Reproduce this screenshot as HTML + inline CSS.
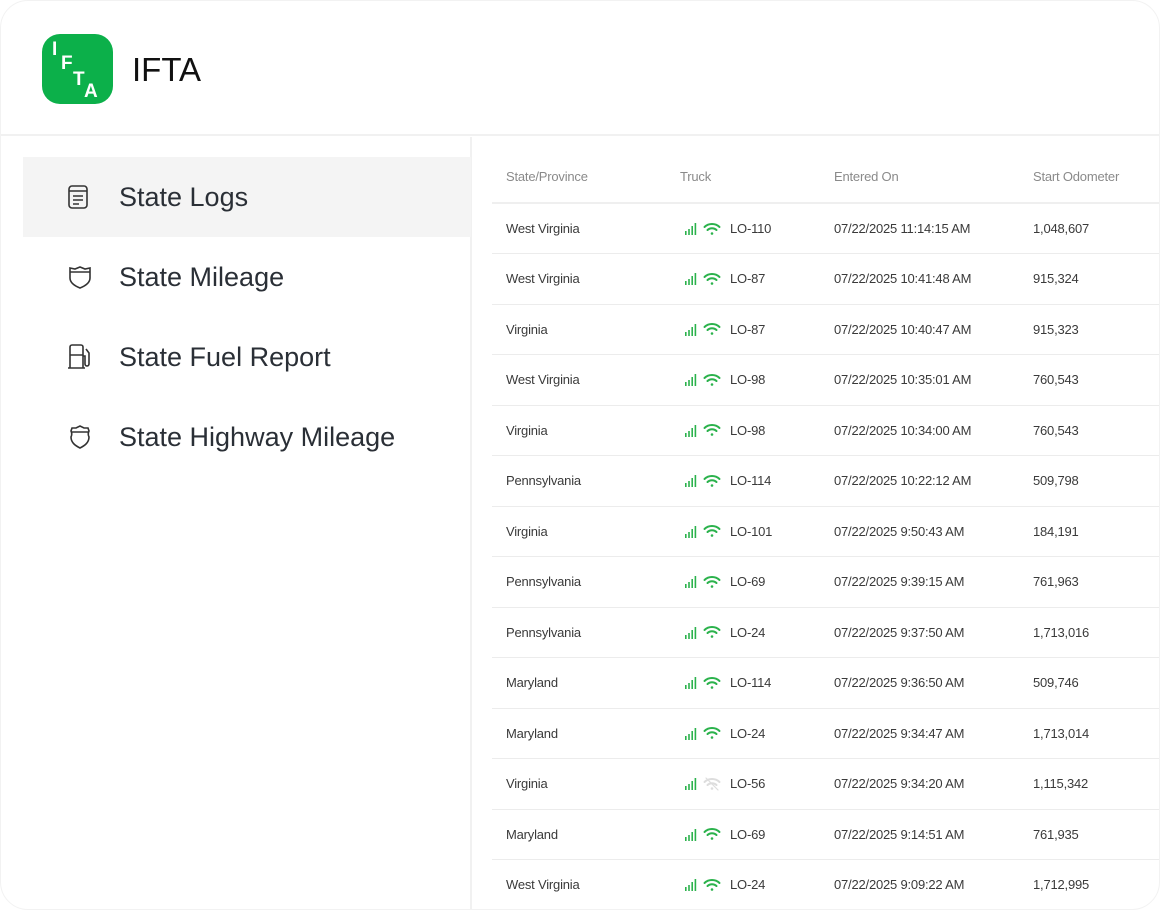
<!DOCTYPE html>
<html><head><meta charset="utf-8"><style>
*{margin:0;padding:0;box-sizing:border-box}
body{width:1160px;height:910px;background:#fff;font-family:"Liberation Sans",sans-serif;overflow:hidden;position:relative}
.card{position:absolute;left:0;top:0;width:1160px;height:910px;border:1px solid #f2f2f2;border-radius:28px;overflow:hidden;background:#fff}
.hdr{position:absolute;left:0;top:0;width:1160px;height:135px;border-bottom:2px solid #f1f1f1}
.logo{position:absolute;left:41px;top:33px;width:71px;height:70px;background:#0cb04a;border-radius:18px;color:#fff;font-weight:bold}
.logo span{position:absolute;font-size:19px;line-height:1}
.title{position:absolute;left:131px;top:50px;font-size:33px;color:#111}
.side{position:absolute;left:0;top:136px;width:471px;height:774px;border-right:2px solid #f1f1f1}
.item{position:absolute;left:22px;width:448px;height:80px;display:flex;align-items:center;font-size:27px;color:#2a2f36}
.item svg{position:absolute;left:44px}
.item .t{position:absolute;left:96px}
.act{background:#f4f4f4}
table{position:absolute;left:491px;top:150px;width:669px;border-collapse:collapse;font-size:13px;color:#3a3a3a;letter-spacing:-0.2px}
th{height:52px;text-align:left;font-weight:normal;color:#8a8a8a;border-bottom:2px solid #efefef}
td{height:50.5px;border-bottom:1px solid #ececec}
th:nth-child(1),td:nth-child(1){padding-left:14px;width:188px}
th:nth-child(2),td:nth-child(2){width:154px}
th:nth-child(3),td:nth-child(3){width:199px}
.tr{display:flex;align-items:center;gap:4px;margin-left:4px}
</style></head><body>
<div class="card">
<div class="hdr">
<div class="logo"><span style="left:10px;top:6px">I</span><span style="left:19px;top:20px">F</span><span style="left:31px;top:36px">T</span><span style="left:42px;top:48px">A</span></div>
<div class="title">IFTA</div>
</div>
<div class="side">
<div class="item act" style="top:20px"><svg width="22" height="26" viewBox="0 0 22 26" fill="none" stroke="#333" stroke-width="1.6"><rect x="2" y="2" width="18" height="22" rx="3"/><path d="M2 7h18M6 12h10M6 16h10M6 20h6"/></svg><span class="t">State Logs</span></div>
<div class="item" style="top:100px"><svg width="26" height="26" viewBox="0 0 26 26" fill="none" stroke="#333" stroke-width="1.6"><path d="M3 4l5 1 5-2 5 2 5-1v10c0 5-5 8-10 10C8 22 3 19 3 14z"/><path d="M3 8h20"/></svg><span class="t">State Mileage</span></div>
<div class="item" style="top:180px"><svg width="28" height="28" viewBox="0 0 28 28" fill="none" stroke="#333" stroke-width="1.6"><path d="M3 25V4a2 2 0 0 1 2-2h9a2 2 0 0 1 2 2v21M1 25h17M3 12h13M16 13h2v8a2 2 0 0 0 4 0V10l-3-4"/></svg><span class="t">State Fuel Report</span></div>
<div class="item" style="top:260px"><svg width="26" height="26" viewBox="0 0 26 26" fill="none" stroke="#333" stroke-width="1.6"><path d="M5 4l4 0 4-2 4 2 4 0 1 3c-1 2-1 4 0 6 0 6-5 9-9 11-4-2-9-5-9-11 1-2 1-4 0-6z"/><path d="M4 8h18"/></svg><span class="t">State Highway Mileage</span></div>
</div>
<table>
<tr><th>State/Province</th><th>Truck</th><th>Entered On</th><th>Start Odometer</th></tr>
</table>
</div>
<script>
const rows=[["West Virginia","LO-110","07/22/2025 11:14:15 AM","1,048,607"],["West Virginia","LO-87","07/22/2025 10:41:48 AM","915,324"],["Virginia","LO-87","07/22/2025 10:40:47 AM","915,323"],["West Virginia","LO-98","07/22/2025 10:35:01 AM","760,543"],["Virginia","LO-98","07/22/2025 10:34:00 AM","760,543"],["Pennsylvania","LO-114","07/22/2025 10:22:12 AM","509,798"],["Virginia","LO-101","07/22/2025 9:50:43 AM","184,191"],["Pennsylvania","LO-69","07/22/2025 9:39:15 AM","761,963"],["Pennsylvania","LO-24","07/22/2025 9:37:50 AM","1,713,016"],["Maryland","LO-114","07/22/2025 9:36:50 AM","509,746"],["Maryland","LO-24","07/22/2025 9:34:47 AM","1,713,014"],["Virginia","LO-56","07/22/2025 9:34:20 AM","1,115,342"],["Maryland","LO-69","07/22/2025 9:14:51 AM","761,935"],["West Virginia","LO-24","07/22/2025 9:09:22 AM","1,712,995"]];
const t=document.querySelector('table');
rows.forEach((r,i)=>{const c=i==11?'#ddd':'#2bb24c';
const sig='<svg width="15" height="13" viewBox="0 0 15 13"><g fill="#2bb24c"><rect x="1" y="9" width="1.6" height="4"/><rect x="4.2" y="7" width="1.6" height="6"/><rect x="7.4" y="4" width="1.6" height="9"/><rect x="10.6" y="1" width="1.6" height="12"/></g></svg>';
const wifi='<svg width="18" height="14" viewBox="0 0 18 14" fill="none" stroke="'+c+'" stroke-width="2" stroke-linecap="round"><path d="M1.5 5a11 11 0 0 1 15 0M4.5 8a6.5 6.5 0 0 1 9 0"/><circle cx="9" cy="11.5" r="1.3" fill="'+c+'" stroke="none"/>'+(i==11?'<path d="M3 1l12 12" stroke-width="1.2"/>':'')+'</svg>';
t.insertAdjacentHTML('beforeend','<tr><td>'+r[0]+'</td><td><div class="tr">'+sig+wifi+'<span style="margin-left:5px">'+r[1]+'</span></div></td><td>'+r[2]+'</td><td>'+r[3]+'</td></tr>');});
</script>
</body></html>
